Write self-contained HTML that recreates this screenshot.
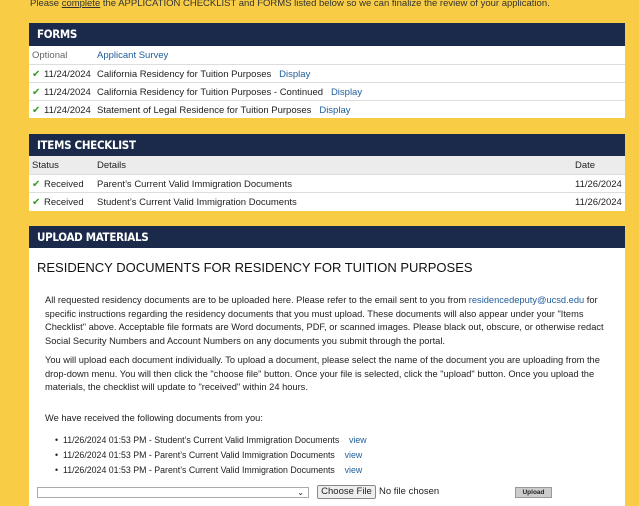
<!DOCTYPE html>
<html><head><meta charset="utf-8"><style>
*{margin:0;padding:0;box-sizing:border-box}
body{width:639px;height:500px;overflow:hidden;background:#f8cd45;font-family:"Liberation Sans",sans-serif;font-size:9.5px;color:#222;position:relative}
.top{position:absolute;left:30px;top:-2px;font-size:9.5px;color:#333}
.panel{position:absolute;left:29px;width:596px;background:#fff}
.hd{background:#1b2a4a;color:#fff;font-weight:bold;font-size:11.5px;letter-spacing:-.3px;padding-left:8px;font-family:"DejaVu Sans Condensed","Liberation Sans Narrow",sans-serif}
.row{position:absolute;left:0;width:596px;height:18px;border-top:1px solid #ddd;line-height:19px}
.row span{position:absolute}
.ck{color:#3c9a2a;font-size:10px}
a{color:#1f5c99;text-decoration:none}
.gray{background:#ececec}
p{position:absolute;left:16px;width:572px;line-height:13.7px;font-size:9.3px}
</style></head><body>
<div class="top">Please <u>complete</u> the APPLICATION CHECKLIST and FORMS listed below so we can finalize the review of your application.</div>

<div class="panel" style="top:23px;height:95px">
<div class="hd" style="height:23px;line-height:23px">FORMS</div>
<div class="row" style="top:23px;border:none"><span style="left:3px;color:#666">Optional</span><span style="left:68px"><a>Applicant Survey</a></span></div>
<div class="row" style="top:41px"><span class="ck" style="left:3px">✔</span><span style="left:15px">11/24/2024</span><span style="left:68px">California Residency for Tuition Purposes &nbsp;&nbsp;<a>Display</a></span></div>
<div class="row" style="top:59px"><span class="ck" style="left:3px">✔</span><span style="left:15px">11/24/2024</span><span style="left:68px">California Residency for Tuition Purposes - Continued &nbsp;&nbsp;<a>Display</a></span></div>
<div class="row" style="top:77px"><span class="ck" style="left:3px">✔</span><span style="left:15px">11/24/2024</span><span style="left:68px">Statement of Legal Residence for Tuition Purposes &nbsp;&nbsp;<a>Display</a></span></div>
</div>

<div class="panel" style="top:134px;height:77px">
<div class="hd" style="height:22px;line-height:22px">ITEMS CHECKLIST</div>
<div class="row gray" style="top:22px;border:none"><span style="left:3px">Status</span><span style="left:68px">Details</span><span style="left:546px">Date</span></div>
<div class="row" style="top:40px"><span class="ck" style="left:3px">✔</span><span style="left:15px">Received</span><span style="left:68px">Parent’s Current Valid Immigration Documents</span><span style="left:546px">11/26/2024</span></div>
<div class="row" style="top:58px"><span class="ck" style="left:3px">✔</span><span style="left:15px">Received</span><span style="left:68px">Student’s Current Valid Immigration Documents</span><span style="left:546px">11/26/2024</span></div>
</div>

<div class="panel" style="top:226px;height:280px">
<div class="hd" style="height:22px;line-height:22px">UPLOAD MATERIALS</div>
<div style="position:absolute;left:8px;top:34px;font-size:13px;color:#111">RESIDENCY DOCUMENTS FOR RESIDENCY FOR TUITION PURPOSES</div>
<p style="top:68px">All requested residency documents are to be uploaded here. Please refer to the email sent to you from <a>residencedeputy@ucsd.edu</a> for specific instructions regarding the residency documents that you must upload. These documents will also appear under your "Items Checklist" above. Acceptable file formats are Word documents, PDF, or scanned images. Please black out, obscure, or otherwise redact Social Security Numbers and Account Numbers on any documents you submit through the portal.</p>
<p style="top:128px">You will upload each document individually. To upload a document, please select the name of the document you are uploading from the drop-down menu. You will then click the "choose file" button. Once your file is selected, click the "upload" button. Once you upload the materials, the checklist will update to "received" within 24 hours.</p>
<p style="top:186px">We have received the following documents from you:</p>
<p style="top:207px;left:26px;line-height:15px;font-size:8.8px">• &nbsp;11/26/2024 01:53 PM - Student’s Current Valid Immigration Documents &nbsp;&nbsp;&nbsp;<a>view</a><br>• &nbsp;11/26/2024 01:53 PM - Parent’s Current Valid Immigration Documents &nbsp;&nbsp;&nbsp;<a>view</a><br>• &nbsp;11/26/2024 01:53 PM - Parent’s Current Valid Immigration Documents &nbsp;&nbsp;&nbsp;<a>view</a></p>
<div style="position:absolute;left:8px;top:261px;width:272px;height:11px;border:1px solid #aaa;background:#fff;font-size:8px;text-align:right;padding-right:4px;line-height:9px">⌄</div>
<div style="position:absolute;left:288px;top:259px;width:59px;height:14px;border:1px solid #888;background:#eee;font-size:9.5px;line-height:12px;text-align:center;border-radius:2px">Choose File</div>
<div style="position:absolute;left:350px;top:260px;font-size:9.5px">No file chosen</div>
<div style="position:absolute;left:486px;top:261px;width:37px;height:11px;background:#ccc;border:1px solid #999;font-size:6.5px;font-weight:bold;line-height:9px;text-align:center">Upload</div>
</div>
</body></html>
